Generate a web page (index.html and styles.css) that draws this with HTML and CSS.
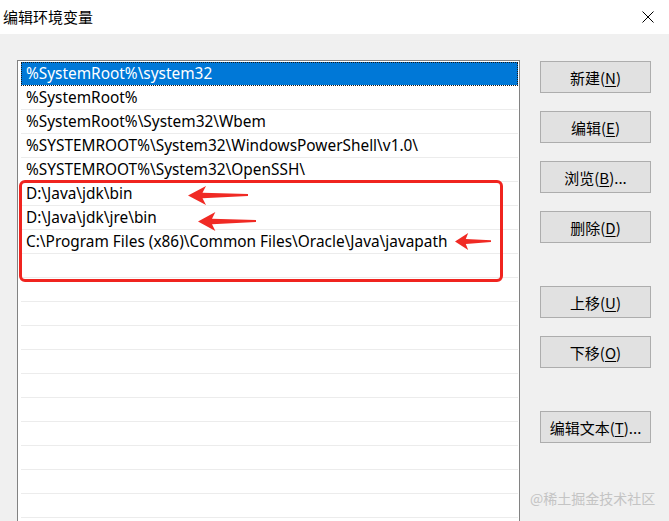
FILE: index.html
```html
<!DOCTYPE html>
<html lang="zh-CN">
<head>
<meta charset="utf-8">
<title>编辑环境变量</title>
<link rel="stylesheet" href="styles.css">
</head>
<body>
<div class="window">
  <div class="titlebar">
    <span class="title">编辑环境变量</span>
    <svg class="close" width="12" height="12" viewBox="0 0 12 12"><path d="M0.5 0.5 L11.5 11.5 M11.5 0.5 L0.5 11.5" stroke="#000" stroke-width="1" fill="none"/></svg>
  </div>
  <div class="content">
    <div class="listbox">
      <div class="row selected"><span>%SystemRoot%\system32</span></div>
      <div class="row"><span>%SystemRoot%</span></div>
      <div class="row"><span>%SystemRoot%\System32\Wbem</span></div>
      <div class="row"><span>%SYSTEMROOT%\System32\WindowsPowerShell\v1.0\</span></div>
      <div class="row"><span>%SYSTEMROOT%\System32\OpenSSH\</span></div>
      <div class="row"><span>D:\Java\jdk\bin</span></div>
      <div class="row"><span>D:\Java\jdk\jre\bin</span></div>
      <div class="row"><span>C:\Program Files (x86)\Common Files\Oracle\Java\javapath</span></div>
      <div class="row"></div>
      <div class="row"></div>
      <div class="row"></div>
      <div class="row"></div>
      <div class="row"></div>
      <div class="row"></div>
      <div class="row"></div>
      <div class="row"></div>
      <div class="row"></div>
      <div class="row"></div>
      <div class="row"></div>
      <div class="row"></div>
    </div>
    <div class="buttons">
      <div class="btn">新建(<u>N</u>)</div>
      <div class="btn">编辑(<u>E</u>)</div>
      <div class="btn">浏览(<u>B</u>)...</div>
      <div class="btn">删除(<u>D</u>)</div>
      <div class="btn gap">上移(<u>U</u>)</div>
      <div class="btn">下移(<u>O</u>)</div>
      <div class="btn gap">编辑文本(<u>T</u>)...</div>
    </div>
  </div>
  <div class="redbox"></div>
  <svg class="arrow a1" viewBox="0 0 60 18" preserveAspectRatio="none"><polygon points="0,9 18,0 14.5,6.3 60,7.6 60,9.4 14.5,11.7 18,18" fill="#f02a24"/></svg>
  <svg class="arrow a2" viewBox="0 0 60 18" preserveAspectRatio="none"><polygon points="0,9 18,0 14.5,6.3 60,7.6 60,9.4 14.5,11.7 18,18" fill="#f02a24"/></svg>
  <svg class="arrow a3" viewBox="0 0 60 18" preserveAspectRatio="none"><polygon points="0,9 22,0 18,6.3 60,7.6 60,9.4 18,11.7 22,18" fill="#f02a24"/></svg>
  <div class="watermark">@稀土掘金技术社区</div>
</div>
</body>
</html>
```

FILE: styles.css
```css
html, body {
  margin: 0;
  padding: 0;
  background: #f0f0f0;
}
.window {
  position: relative;
  width: 669px;
  height: 521px;
  overflow: hidden;
  background: #f0f0f0;
  font-family: "Noto Sans", "Noto Sans CJK SC", sans-serif;
  color: #000;
}
.titlebar {
  height: 34px;
  background: #fff;
  display: flex;
  align-items: center;
  justify-content: space-between;
  padding: 0 15px 0 3px;
}
.title {
  font-family: "Noto Sans CJK SC", sans-serif;
  font-size: 15px;
  line-height: 34px;
  margin-top: -1px;
}
.close {
  display: block;
}
.content {
  display: flex;
  padding: 26px 0 0 17px;
}
.listbox {
  width: 503px;
  height: 480px;
  box-sizing: border-box;
  background: #fff;
  border: 1px solid #828282;
  border-bottom: none;
  padding: 1px 1px 0 3px;
  flex-shrink: 0;
}
.row {
  height: 23px;
  border-bottom: 1px solid #ececec;
  font-size: 15.4px;
  line-height: 24px;
  padding-left: 5px;
  white-space: nowrap;
  box-sizing: content-box;
}
.row.selected {
  background: #0078d7;
  color: #fff;
  outline: 1px dotted #1a1a1a;
  outline-offset: -1px;
  border-bottom-color: #fff;
}
.buttons {
  display: flex;
  flex-direction: column;
  gap: 18px;
  margin: 1px 0 0 20px;
}
.btn {
  width: 111px;
  height: 32px;
  box-sizing: border-box;
  background: #e1e1e1;
  border: 1px solid #adadad;
  display: flex;
  align-items: center;
  justify-content: center;
  font-family: "Noto Sans CJK SC", sans-serif;
  font-size: 15px;
}
.btn.gap {
  margin-top: 25px;
}
.btn u {
  text-decoration-thickness: 1px;
  text-underline-offset: 2px;
}
.redbox {
  position: absolute;
  left: 19px;
  top: 180px;
  width: 484px;
  height: 102px;
  box-sizing: border-box;
  border: 3px solid #f0241f;
  border-radius: 6px;
}
.arrow {
  position: absolute;
  display: block;
}
.a1 { left: 188px; top: 186px; width: 60px; height: 19px; }
.a2 { left: 198px; top: 212px; width: 58px; height: 19px; }
.a3 { left: 455px; top: 233px; width: 36px; height: 17px; }
.watermark {
  position: absolute;
  left: 530px;
  top: 488px;
  font-family: "Noto Sans CJK SC", sans-serif;
  font-size: 14px;
  color: #c4c4c4;
}
```
